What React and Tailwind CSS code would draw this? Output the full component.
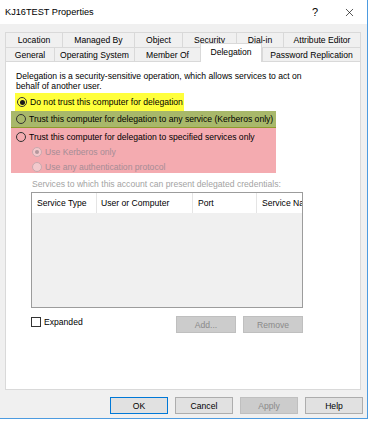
import { X } from "lucide-react";

const row1 = [
  { label: "Location", w: "w-[57px]" },
  { label: "Managed By", w: "w-[72px]" },
  { label: "Object", w: "w-[48px]" },
  { label: "Security", w: "w-[54px]" },
  { label: "Dial-in", w: "w-[47px]" },
  { label: "Attribute Editor", w: "w-[78px]" },
];

const row2 = [
  { label: "General", w: "w-[49px]" },
  { label: "Operating System", w: "w-[80px]" },
  { label: "Member Of", w: "w-[66px]" },
  { label: "Delegation", w: "w-[62px]", active: true },
  { label: "Password Replication", w: "w-[99px]" },
];

function Radio({ checked, disabled }) {
  if (disabled) {
    return (
      <span className="flex h-[10px] w-[10px] shrink-0 items-center justify-center rounded-full border border-[#c9a9ae] bg-[#f3c9cc]">
        {checked && <span className="h-[4px] w-[4px] rounded-full bg-[#b3979c]" />}
      </span>
    );
  }
  return (
    <span className="flex h-[10px] w-[10px] shrink-0 items-center justify-center rounded-full border border-[#333333]">
      {checked && <span className="h-[5px] w-[5px] rounded-full bg-[#1a1a1a]" />}
    </span>
  );
}

function Button({ children, primary, disabled, className = "" }) {
  let look = "border-[#adadad] bg-[#e1e1e1] text-black";
  if (primary) look = "border-[#0078d7] bg-[#e1e1e1] text-black";
  if (disabled) look = "border-[#bfbfbf] bg-[#cccccc] text-[#8a8a8a]";
  return (
    <div className={`flex h-[17px] w-[58px] items-center justify-center border ${look} ${className}`}>
      {children}
    </div>
  );
}

export default function App() {
  return (
    <div className="h-[422px] w-[370px] bg-white font-['Liberation_Sans',Arial,sans-serif] text-[8.6px] leading-[10px] text-black">
      <div className="flex h-[419px] w-[368px] flex-col border-r border-b border-[#4d9be0] bg-[#f0f0f0]">
        {/* title bar */}
        <div className="flex h-[24px] items-center bg-white pl-[5px]">
          <span className="text-[9.2px]">KJ16TEST Properties</span>
          <span className="ml-auto text-[11px]">?</span>
          <X className="ml-[25px] mr-[11px] h-[13px] w-[13px]" strokeWidth={1.2} />
        </div>

        {/* tabs */}
        <div className="ml-[5px] mt-[8px]">
          <div className="flex h-[15px]">
            {row1.map((t, i) => (
              <div
                key={t.label}
                className={`flex ${t.w} items-center justify-center border-t border-l border-[#d9d9d9] ${i === row1.length - 1 ? "border-r" : ""}`}
              >
                {t.label}
              </div>
            ))}
          </div>
          <div className="flex h-[14px] items-end">
            {row2.map((t, i) =>
              t.active ? (
                <div
                  key={t.label}
                  className={`relative top-[1px] z-10 flex h-[19px] ${t.w} items-center justify-center border-t border-l border-r border-[#d9d9d9] bg-white pb-[2px]`}
                >
                  {t.label}
                </div>
              ) : (
                <div
                  key={t.label}
                  className={`flex h-[14px] ${t.w} items-center justify-center border-t border-l border-[#d9d9d9] ${i === row2.length - 1 ? "border-r" : ""}`}
                >
                  {t.label}
                </div>
              )
            )}
          </div>
        </div>

        {/* panel */}
        <div className="ml-[5px] h-[329px] w-[356px] border border-[#d9d9d9] bg-white">
          <div className="ml-[10px] mt-[9px]">
            <div>Delegation is a security-sensitive operation, which allows services to act on</div>
            <div>behalf of another user.</div>
          </div>

          <div className="ml-[9px] mt-[2px] flex h-[18px] w-[169px] items-center gap-[3px] bg-[#ffff3c] pl-[2px]">
            <Radio checked />
            <span>Do not trust this computer for delegation</span>
          </div>

          <div className="ml-[5px] flex h-[17px] w-[265px] items-center gap-[3px] border-b border-[#8e9a2c] bg-[#a8b86a] pl-[5px]">
            <Radio />
            <span>Trust this computer for delegation to any service (Kerberos only)</span>
          </div>

          <div className="ml-[5px] h-[45px] w-[265px] bg-[#f4abb0] pl-[5px] pt-[1px]">
            <div className="flex h-[15px] items-center gap-[3px]">
              <Radio />
              <span>Trust this computer for delegation to specified services only</span>
            </div>
            <div className="flex h-[15px] items-center gap-[3px] pl-[16px] text-[#a68d96]">
              <Radio checked disabled />
              <span>Use Kerberos only</span>
            </div>
            <div className="flex h-[15px] items-center gap-[3px] pl-[16px] text-[#a68d96]">
              <Radio disabled />
              <span>Use any authentication protocol</span>
            </div>
          </div>

          <div className="ml-[26px] mt-[6px] text-[#a3a3a3]">
            Services to which this account can present delegated credentials:
          </div>

          <div className="ml-[25px] mt-[3px] flex h-[116px] w-[272px] flex-col border border-[#9c9c9c] bg-[#f0f0f0]">
            <div className="flex h-[20px] shrink-0 overflow-hidden bg-white">
              <div className="flex w-[65px] shrink-0 items-center border-r border-[#e5e5e5] pl-[5px]">Service Type</div>
              <div className="flex w-[96px] shrink-0 items-center border-r border-[#e5e5e5] pl-[4px]">User or Computer</div>
              <div className="flex w-[64px] shrink-0 items-center border-r border-[#e5e5e5] pl-[5px]">Port</div>
              <div className="flex shrink-0 items-center whitespace-nowrap pl-[5px]">Service Name</div>
            </div>
          </div>

          <div className="ml-[25px] mt-[8px] flex w-[272px] items-start justify-between">
            <div className="mt-[1px] flex items-center gap-[3px]">
              <span className="h-[10px] w-[10px] border border-[#333333] bg-white" />
              <span>Expanded</span>
            </div>
            <div className="flex gap-[7px]">
              <Button disabled className="w-[60px]">Add...</Button>
              <Button disabled className="w-[60px]">Remove</Button>
            </div>
          </div>
        </div>

        {/* dialog buttons */}
        <div className="mt-[7px] flex justify-end gap-[7px] pr-[4px]">
          <Button primary>OK</Button>
          <Button>Cancel</Button>
          <Button disabled>Apply</Button>
          <Button>Help</Button>
        </div>
      </div>
    </div>
  );
}
